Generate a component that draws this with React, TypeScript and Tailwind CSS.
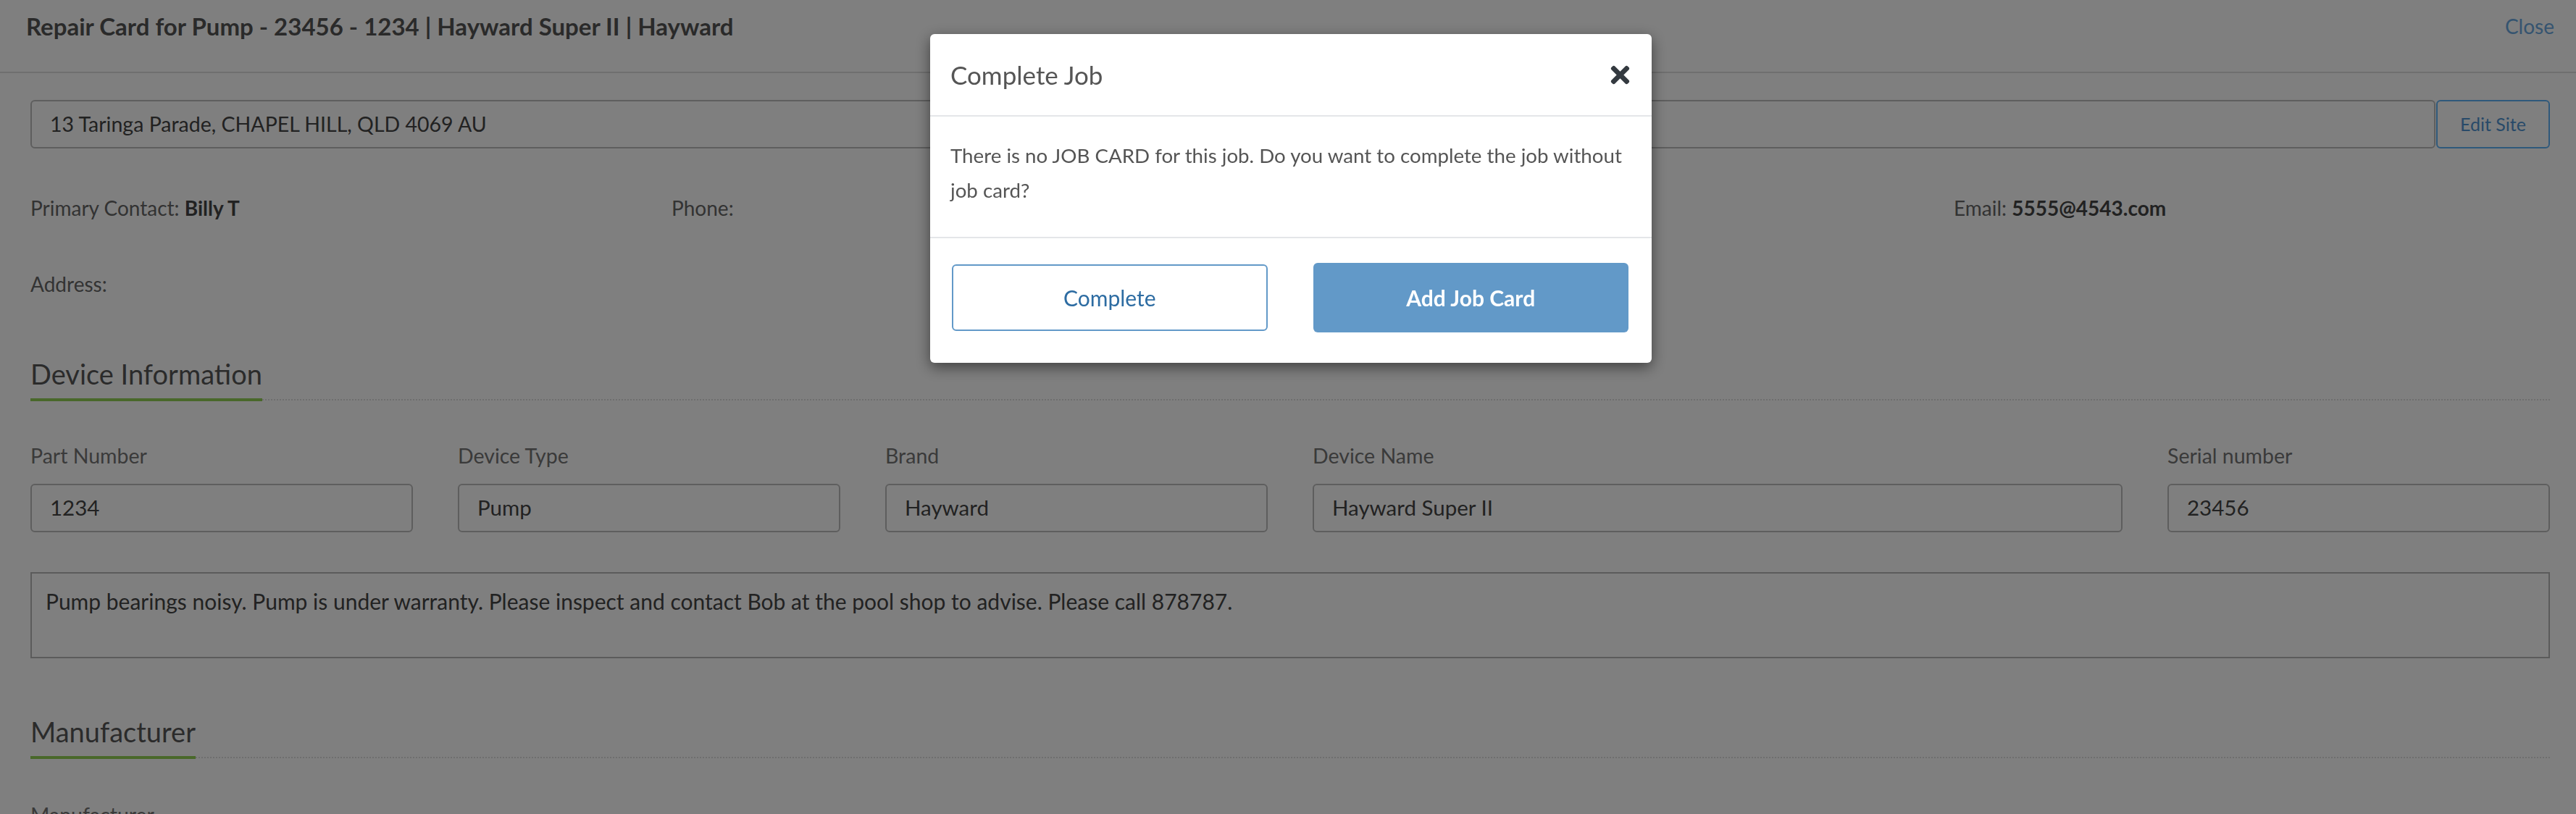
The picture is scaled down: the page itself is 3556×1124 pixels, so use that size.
import { FaTimes } from "react-icons/fa";

const FONT = { fontFamily: "Lato, 'Liberation Sans', sans-serif" };

function SectionHeading({ title }: { title: string }) {
  return (
    <div className="border-b-2 border-dotted border-[#dcdcdc]">
      <span className="inline-block -mb-[3px] pb-[10px] border-b-4 border-[#92d054] text-[38px] leading-[48px] text-[#575757]">
        {title}
      </span>
    </div>
  );
}

function Field({ label, value, span }: { label: string; value: string; span: string }) {
  return (
    <div className={span}>
      <div className="text-[28.5px] leading-[40px] text-[#747474]">{label}</div>
      <div className="mt-[19px] h-[67px] flex items-center px-[25px] rounded-[6px] border-2 border-[#bcbcbc] text-[29.5px] text-[#444]">
        {value}
      </div>
    </div>
  );
}

export default function App() {
  return (
    <div className="relative min-h-screen bg-white" style={FONT}>
      <div className="h-[101px] border-b-2 border-[#dedede] flex items-start justify-between pl-[36px] pr-[30px] pt-[14px]">
        <h1 className="text-[33px] leading-[44px] font-bold text-[#555]">
          Repair Card for Pump - 23456 - 1234 | Hayward Super II | Hayward
        </h1>
        <a className="text-[28px] leading-[44px] text-[#6aa8e0]">Close</a>
      </div>

      <div className="pl-[42px] pr-[36px]">
        <div className="mt-[37px] flex gap-[1px] h-[67px]">
          <div className="flex-1 flex items-center px-[25px] rounded-[6px] border-2 border-[#bcbcbc] text-[28.5px] text-[#444]">
            13 Taringa Parade, CHAPEL HILL, QLD 4069 AU
          </div>
          <button className="w-[157px] rounded-[6px] border-2 border-[#5fb2f6] text-[25px] text-[#5194d2] bg-white">
            Edit Site
          </button>
        </div>

        <div className="mt-[62px] grid grid-cols-4 gap-[62px] text-[28px] leading-[40px] text-[#666]">
          <div>
            Primary Contact: <b className="text-[#444]">Billy T</b>
          </div>
          <div>Phone:</div>
          <div />
          <div>
            Email: <b className="text-[#444]">5555@4543.com</b>
          </div>
        </div>

        <div className="mt-[65px] text-[28px] leading-[40px] text-[#666]">Address:</div>

        <div className="mt-[80px]">
          <SectionHeading title="Device Information" />
        </div>

        <div className="mt-[56px] grid grid-cols-12 gap-[62px]">
          <Field span="col-span-2" label="Part Number" value="1234" />
          <Field span="col-span-2" label="Device Type" value="Pump" />
          <Field span="col-span-2" label="Brand" value="Hayward" />
          <Field span="col-span-4" label="Device Name" value="Hayward Super II" />
          <Field span="col-span-2" label="Serial number" value="23456" />
        </div>

        <div className="mt-[55px] h-[119px] border-2 border-[#b6b6b6] px-[19px] pt-[18px] text-[30px] leading-[40px] text-[#444]">
          Pump bearings noisy. Pump is under warranty. Please inspect and contact Bob at the pool shop to advise. Please call 878787.
        </div>

        <div className="mt-[77px]">
          <SectionHeading title="Manufacturer" />
        </div>

        <div className="mt-[58px] text-[28.5px] leading-[40px] text-[#747474]">Manufacturer</div>
        <div className="mt-[19px] h-[67px] w-[1118px] rounded-[6px] border-2 border-[#bcbcbc]" />
      </div>

      <div className="fixed inset-0 bg-black/50 flex justify-center items-start">
        <div className="mt-[47px] ml-[8px] w-[996px] bg-white rounded-[6px] shadow-[0_6px_20px_rgba(0,0,0,0.5)]">
          <div className="h-[114px] flex items-center justify-between pl-[28px] pr-[25px] border-b-2 border-[#e4e6e9]">
            <h2 className="text-[35px] text-[#555]">Complete Job</h2>
            <FaTimes className="w-[37px] h-[37px] text-[#343a40]" />
          </div>
          <div className="pl-[28px] pr-[24px] pt-[30px] pb-[40px] text-[27.7px] leading-[48px] text-[#555] border-b-2 border-[#e4e6e9]">
            There is no JOB CARD for this job. Do you want to complete the job without job card?
          </div>
          <div className="grid grid-cols-2 items-center gap-[63px] pl-[30px] pr-[32px] pt-[34px] pb-[42px]">
            <button className="h-[92px] rounded-[6px] border-2 border-[#6299c8] bg-white text-[30px] text-[#2d6ca2]">
              Complete
            </button>
            <button className="h-[96px] rounded-[6px] bg-[#6299c8] text-[30px] font-bold text-white">
              Add Job Card
            </button>
          </div>
        </div>
      </div>
    </div>
  );
}
